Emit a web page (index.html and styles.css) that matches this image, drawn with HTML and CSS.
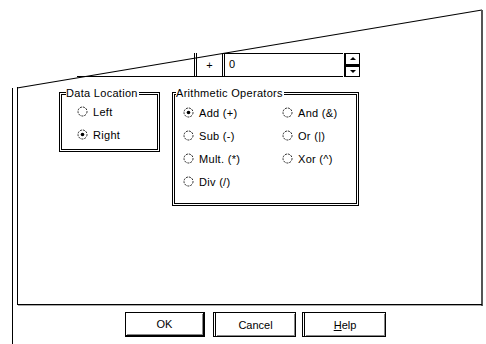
FILE: index.html
```html
<!DOCTYPE html>
<html lang="en">

<head>
    <meta charset="UTF-8">
    <title>Arithmetic</title>
    <link rel="stylesheet" href="styles.css">
</head>

<body>

    <div class="screen">
        <!-- skewed dialog frame -->
        <svg class="frame" width="486" height="344" viewBox="0 0 486 344">
            <line x1="17" y1="88" x2="482" y2="10" stroke="#000" stroke-width="1.2" />
            <line x1="17.5" y1="87" x2="17.5" y2="305" stroke="#000" />
            <line x1="12.5" y1="88" x2="12.5" y2="344" stroke="#000" />
            <line x1="482" y1="10" x2="482" y2="306" stroke="#555" stroke-width="2" />
            <line x1="17" y1="304.5" x2="482" y2="304.5" stroke="#000" />
            <line x1="18" y1="305.5" x2="481" y2="305.5" stroke="#aaa" />
        </svg>

        <div class="toprow">
            <div class="field-left"></div>
            <div class="plus">+</div>
            <div class="value">0</div>
            <div class="spin">
                <div class="spin-btn"><span class="arrow-up"></span></div>
                <div class="spin-btn"><span class="arrow-down"></span></div>
            </div>
        </div>

        <div class="panel">
            <fieldset class="group data">
                <legend>Data Location</legend>
                <div class="options">
                    <div class="radio"><svg class="dot" width="11" height="11"><circle cx="5.5" cy="5.5" r="4.5" /></svg>Left</div>
                    <div class="radio"><svg class="dot" width="11" height="11"><circle cx="5.5" cy="5.5" r="4.5" /><circle class="on" cx="5.5" cy="5.5" r="1.8" /></svg>Right</div>
                </div>
            </fieldset>

            <fieldset class="group ops">
                <legend>Arithmetic Operators</legend>
                <div class="options">
                    <div class="radio"><svg class="dot" width="11" height="11"><circle cx="5.5" cy="5.5" r="4.5" /><circle class="on" cx="5.5" cy="5.5" r="1.8" /></svg>Add (+)</div>
                    <div class="radio"><svg class="dot" width="11" height="11"><circle cx="5.5" cy="5.5" r="4.5" /></svg>And (&amp;)</div>
                    <div class="radio"><svg class="dot" width="11" height="11"><circle cx="5.5" cy="5.5" r="4.5" /></svg>Sub (-)</div>
                    <div class="radio"><svg class="dot" width="11" height="11"><circle cx="5.5" cy="5.5" r="4.5" /></svg>Or (|)</div>
                    <div class="radio"><svg class="dot" width="11" height="11"><circle cx="5.5" cy="5.5" r="4.5" /></svg>Mult. (*)</div>
                    <div class="radio"><svg class="dot" width="11" height="11"><circle cx="5.5" cy="5.5" r="4.5" /></svg>Xor (^)</div>
                    <div class="radio"><svg class="dot" width="11" height="11"><circle cx="5.5" cy="5.5" r="4.5" /></svg>Div (/)</div>
                </div>
            </fieldset>
        </div>

        <div class="buttons">
            <button class="btn default">OK</button>
            <button class="btn cancel">Cancel</button>
            <button class="btn help"><u>H</u>elp</button>
        </div>
    </div>

</body>

</html>
```

FILE: styles.css
```css
body {
    margin: 0;
    padding: 0;
    background-color: #fff;
}

.screen {
    position: relative;
    width: 486px;
    height: 344px;
    overflow: hidden;
    background-color: #fff;
    font-family: 'Liberation Sans', Arial, sans-serif;
    font-size: 11px;
    letter-spacing: 0.3px;
    color: #000;
}

.frame {
    position: absolute;
    top: 0;
    left: 0;
    pointer-events: none;
}

.toprow {
    display: flex;
    margin-top: 53px;
    padding-left: 77px;
    height: 24px;
}

.field-left {
    width: 120px;
    box-sizing: border-box;
    border-bottom: 1px solid #000;
    border-right: 3px double #000;
}

.plus {
    width: 25px;
    box-sizing: border-box;
    border-bottom: 1px solid #000;
    text-align: center;
    line-height: 22px;
    padding-top: 1px;
}

.value {
    width: 121px;
    box-sizing: border-box;
    border-top: 1px solid #000;
    border-bottom: 1px solid #000;
    border-left: 3px double #000;
    padding-left: 4px;
    line-height: 20px;
}

.spin {
    width: 16px;
    margin-left: 1px;
    display: flex;
    flex-direction: column;
}

.spin-btn {
    flex: 1;
    box-sizing: border-box;
    border: 1px solid #000;
    border-left: 2px solid #000;
    display: flex;
    align-items: center;
    justify-content: center;
}

.spin-btn + .spin-btn {
    border-top: 2px solid #000;
}

.arrow-up {
    width: 0;
    height: 0;
    border-left: 3px solid transparent;
    border-right: 3px solid transparent;
    border-bottom: 3px solid #000;
}

.arrow-down {
    width: 0;
    height: 0;
    border-left: 3px solid transparent;
    border-right: 3px solid transparent;
    border-top: 3px solid #000;
}

.panel {
    display: flex;
    align-items: flex-start;
    gap: 12px;
    margin-top: 10px;
    padding-left: 59px;
}

.group {
    margin: 0;
    box-sizing: border-box;
    border: 3px double #000;
    padding: 0;
}

.group legend {
    padding: 0 1px 0 0;
    margin-left: 1px;
    line-height: 13px;
}

.data {
    width: 101px;
    height: 65px;
}

.data legend {
    margin-left: 4px;
}

.data .options {
    padding-left: 15px;
}

.ops {
    width: 187px;
    height: 119px;
}

.ops .options {
    padding: 1px 0 0 8px;
    display: grid;
    grid-template-columns: 99px 1fr;
}

.radio {
    display: flex;
    align-items: center;
    height: 23px;
}

.dot {
    margin-right: 5px;
    flex: none;
}

.dot circle {
    fill: #fff;
    stroke: #222;
    stroke-width: 1;
    stroke-dasharray: 2 1;
}

.dot circle.on {
    fill: #000;
    stroke: none;
}

.buttons {
    display: flex;
    margin-top: 106px;
    padding-left: 125px;
}

.btn {
    height: 25px;
    box-sizing: border-box;
    background-color: #fff;
    border: 1px solid #000;
    box-shadow: inset 1px 1px 0 #fff, inset -1px -1px 0 #888;
    font-family: 'Liberation Sans', Arial, sans-serif;
    font-size: 11px;
    color: #000;
    padding: 0;
}

.default {
    width: 80px;
    border-right-width: 2px;
    border-bottom-width: 2px;
}

.cancel {
    width: 83px;
    margin-left: 8px;
    border-left: 3px double #000;
}

.help {
    width: 84px;
    margin-left: 6px;
    border-left: 3px double #000;
}
```
